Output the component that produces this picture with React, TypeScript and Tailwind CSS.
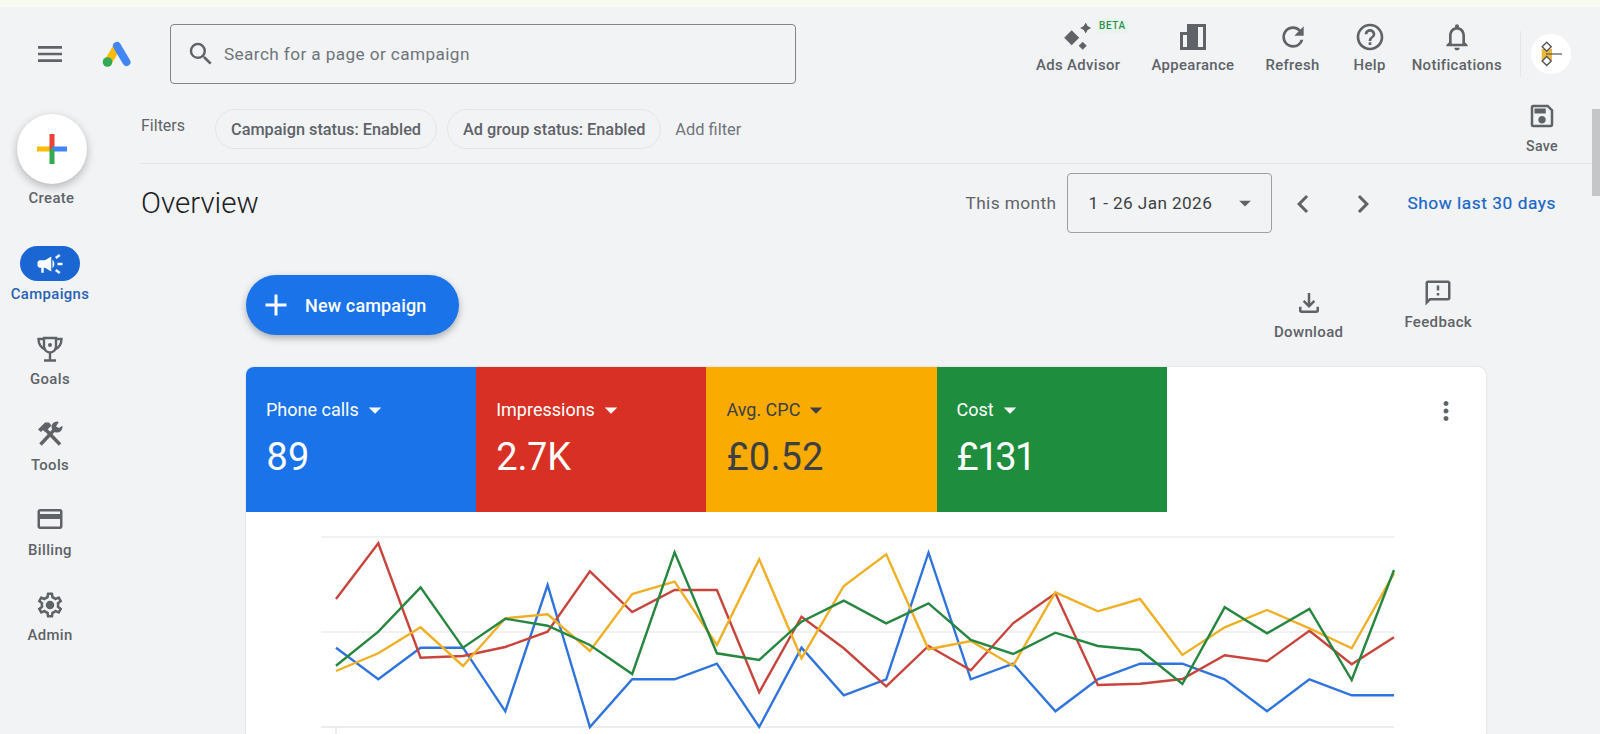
import React from "react";
import {
  MdMenu, MdSearch, MdRefresh, MdHelpOutline, MdOutlineNotifications, MdOutlineSave,
  MdCampaign, MdOutlineCreditCard, MdOutlineFileDownload, MdOutlineFeedback,
  MdMoreVert, MdArrowDropDown, MdChevronLeft, MdChevronRight, MdAdd,
} from "react-icons/md";

const X0 = 90;
const STEP = 42.32;
const toPts = (d: number[]) => d.map((p, i) => `${(X0 + STEP * i).toFixed(1)},${(p / 3 - 2).toFixed(1)}`).join(" ");

const blue = [413, 508, 413, 413, 604, 225, 651, 508, 508, 461, 651, 413, 556, 508, 128, 508, 461, 604, 508, 461, 461, 508, 604, 508, 556, 556];
const red = [267, 100, 443, 438, 411, 365, 184, 306, 240, 240, 547, 320, 415, 529, 408, 481, 340, 250, 525, 521, 507, 436, 454, 362, 463, 382];
const amber = [483, 430, 352, 468, 325, 313, 423, 252, 215, 405, 148, 445, 228, 133, 418, 393, 467, 247, 304, 267, 435, 352, 300, 355, 415, 190];
const green = [467, 365, 232, 413, 326, 347, 405, 492, 127, 430, 450, 335, 272, 340, 280, 390, 432, 368, 408, 420, 522, 292, 370, 297, 510, 180];

function Logo() {
  return (
    <svg width="30" height="28" viewBox="0 0 30 28" className="shrink-0">
      <line x1="15" y1="7" x2="6" y2="22" stroke="#fbbc04" strokeWidth="8" strokeLinecap="round" />
      <line x1="15" y1="6" x2="24.5" y2="22" stroke="#4285f4" strokeWidth="8" strokeLinecap="round" />
      <circle cx="5.5" cy="22" r="4.8" fill="#34a853" />
    </svg>
  );
}

function AdvisorIcon() {
  return (
    <svg width="30" height="28" viewBox="0 0 30 28">
      <path d="M8.7 7.2l7.5 7.5-7.5 7.5-7.5-7.5z" fill="#5f6368" />
      <path d="M22.7-.5l1.9 3.6 3.6 1.9-3.6 1.9-1.9 3.6-1.9-3.6-3.6-1.9 3.6-1.9z" fill="#5f6368" />
      <path d="M19.7 18.7l4 4-4 4-4-4z" fill="#5f6368" />
    </svg>
  );
}

function AppearanceIcon() {
  return (
    <svg width="26" height="26" viewBox="0 0 26 26">
      <path fillRule="evenodd" d="M0 8h7V0h19v26H0zM3 11v12h4V11zM18 3v20h5V3z" fill="#5f6368" />
    </svg>
  );
}

function TrophyIcon() {
  return (
    <svg width="28" height="28" viewBox="0 0 28 28" fill="none" stroke="#5f6368" strokeWidth="2.4">
      <path d="M8 3h12v8.5a6 6 0 0 1-12 0z" />
      <path d="M8 4H2.5c0 5 1.5 8.5 7 10.5M20 4h5.5c0 5-1.5 8.5-7 10.5" />
      <path d="M14 17.5V25M8 25.5h12" />
      <circle cx="14" cy="10" r="2" fill="#5f6368" stroke="none" />
    </svg>
  );
}

function ToolsIcon() {
  return (
    <svg width="26" height="26" viewBox="0 0 26 26">
      <line x1="9" y1="9" x2="23" y2="23.5" stroke="#5f6368" strokeWidth="3.4" />
      <line x1="19" y1="7" x2="3.5" y2="23.5" stroke="#5f6368" strokeWidth="3.4" />
      <path d="M1 8.5L8 1.5h4l2.5 3-6.5 6.5-2-2-2 2z" fill="#5f6368" />
      <circle cx="20" cy="6" r="5.5" fill="#5f6368" />
      <path d="M19 5.5L23 -1l5 4-6 4z" fill="#f1f3f5" />
    </svg>
  );
}

function GearIcon() {
  return (
    <svg width="30" height="30" viewBox="0 0 24 24" fill="#5f6368">
      <path d="M19.43 12.98c.04-.32.07-.64.07-.98 0-.34-.03-.66-.07-.98l2.11-1.65c.19-.15.24-.42.12-.64l-2-3.46c-.09-.16-.26-.25-.44-.25-.06 0-.12.01-.17.03l-2.49 1c-.52-.4-1.08-.73-1.69-.98l-.38-2.65C14.46 2.18 14.25 2 14 2h-4c-.25 0-.46.18-.49.42l-.38 2.65c-.61.25-1.17.59-1.69.98l-2.49-1c-.06-.02-.12-.03-.18-.03-.17 0-.34.09-.43.25l-2 3.46c-.13.22-.07.49.12.64l2.11 1.65c-.04.32-.07.65-.07.98 0 .33.03.66.07.98l-2.11 1.65c-.19.15-.24.42-.12.64l2 3.46c.09.16.26.25.44.25.06 0 .12-.01.17-.03l2.49-1c.52.4 1.08.73 1.69.98l.38 2.65c.03.24.24.42.49.42h4c.25 0 .46-.18.49-.42l.38-2.65c.61-.25 1.17-.59 1.69-.98l2.49 1c.06.02.12.03.18.03.17 0 .34-.09.43-.25l2-3.46c.12-.22.07-.49-.12-.64l-2.11-1.65zm-1.98-1.71c.04.31.05.52.05.73 0 .21-.02.43-.05.73l-.14 1.13.89.7 1.08.84-.7 1.21-1.27-.51-1.04-.42-.9.68c-.43.32-.84.56-1.25.73l-1.06.43-.16 1.13-.2 1.35h-1.4l-.19-1.35-.16-1.13-1.06-.43c-.43-.18-.83-.41-1.23-.71l-.91-.7-1.06.43-1.27.51-.7-1.21 1.08-.84.89-.7-.14-1.13c-.03-.31-.05-.54-.05-.74s.02-.43.05-.73l.14-1.13-.89-.7-1.08-.84.7-1.21 1.27.51 1.04.42.9-.68c.43-.32.84-.56 1.25-.73l1.06-.43.16-1.13.2-1.35h1.39l.19 1.35.16 1.13 1.06.43c.43.18.83.41 1.23.71l.91.7 1.06-.43 1.27-.51.7 1.21-1.07.85-.89.7.14 1.13z" />
      <circle cx="12" cy="12" r="3.4" />
    </svg>
  );
}

function Avatar() {
  return (
    <div className="flex h-[40px] w-[40px] items-center justify-center rounded-full bg-white">
      <svg width="40" height="40" viewBox="0 0 40 40">
        <rect x="10.7" y="15" width="10.3" height="11" fill="#edb83a" />
        <path d="M15.7 8.2l4.5 4.5-4.5 4.5-4.5-4.5zM15.7 22.5l4.5 4.5-4.5 4.5-4.5-4.5z" fill="#fff" stroke="#555" strokeWidth="1.4" />
        <path d="M15 20h16" stroke="#555" strokeWidth="1.2" />
      </svg>
    </div>
  );
}

function Tool({ icon, label, className }: { icon: React.ReactNode; label: string; className: string }) {
  return (
    <div className={`flex flex-col items-center ${className}`}>
      <div className="-mt-[1px] flex h-[28px] items-center justify-center">{icon}</div>
      <span className="mt-[5px] text-[14.9px] leading-[18px] font-medium tracking-[0.35px] whitespace-nowrap text-[#5f6368]">{label}</span>
    </div>
  );
}

function NavItem({ icon, label, active }: { icon: React.ReactNode; label: string; active?: boolean }) {
  return (
    <div className="flex h-[85.3px] flex-col items-center">
      <div className={active ? "flex h-[35px] w-[60px] items-center justify-center rounded-full bg-[#1a66d2]" : "flex h-[35px] w-[60px] items-center justify-center"}>{icon}</div>
      <span className={active ? "mt-[4px] text-[14.9px] leading-[18px] font-medium tracking-[0.35px] text-[#2a62b4]" : "mt-[4px] text-[14.9px] leading-[18px] font-medium tracking-[0.35px] text-[#5f6368]"}>{label}</span>
    </div>
  );
}

function Chip({ label }: { label: string }) {
  return (
    <div className="flex h-[40px] items-center rounded-full border border-[#e3e5e8] px-[15px] pt-[2px] text-[16.3px] font-medium whitespace-nowrap text-[#5f6368]">{label}</div>
  );
}

function Metric({ bg, fg, label, value }: { bg: string; fg: string; label: string; value: string }) {
  return (
    <div className={`h-[145px] w-[230.2px] shrink-0 pt-[31px] pl-[20px] ${bg} ${fg}`}>
      <div className="flex h-[24px] items-center text-[18px] leading-[24px]">
        <span>{label}</span>
        <MdArrowDropDown size={30} className="ml-[1px]" />
      </div>
      <div className="mt-[11px] text-[38px] leading-[48px] proportional-nums">{value}</div>
    </div>
  );
}

export default function App() {
  return (
    <div className="relative flex h-[734px] w-[1600px] flex-col overflow-hidden bg-[#f1f3f5] font-['Roboto',sans-serif]">
      <div className="h-[7px] shrink-0 bg-[#f8fcf0]" />

      <header className="flex h-[93px] shrink-0 items-center">
        <MdMenu size={32} color="#5f6368" className="ml-[34px] shrink-0" />
        <div className="ml-[36px]"><Logo /></div>
        <div className="ml-[38px] flex h-[60px] w-[626px] items-center rounded-[4px] border border-[#80868b]">
          <MdSearch size={30} color="#5f6368" className="ml-[15px]" />
          <span className="ml-[8px] pt-[2px] text-[17.2px] tracking-[0.4px] text-[#70757a]">Search for a page or campaign</span>
        </div>
        <div className="relative -mt-[9px] ml-auto flex items-start">
          <div className="relative">
            <Tool className="" icon={<AdvisorIcon />} label="Ads Advisor" />
            <span className="absolute top-[-5px] left-[61px] rounded-[3px] bg-[#e9f4ec] px-[2px] text-[10px] leading-[14px] font-medium tracking-[0.6px] text-[#2d9150]">BETA</span>
          </div>
          <Tool className="ml-[31px]" icon={<AppearanceIcon />} label="Appearance" />
          <Tool className="ml-[31px]" icon={<MdRefresh size={32} color="#5f6368" />} label="Refresh" />
          <Tool className="ml-[34px]" icon={<MdHelpOutline size={32} color="#5f6368" />} label="Help" />
          <Tool className="ml-[26px]" icon={<MdOutlineNotifications size={32} color="#5f6368" />} label="Notifications" />
        </div>
        <div className="mr-[29px] ml-[18px] flex items-center">
          <div className="h-[46px] w-px bg-[#e3e5e8]" />
          <div className="ml-[10px]"><Avatar /></div>
        </div>
      </header>

      <div className="flex min-h-0 flex-1">
        <aside className="flex w-[141px] shrink-0 flex-col">
          <div className="flex w-[104px] flex-col items-center pt-[14px]">
            <div className="flex h-[70px] w-[70px] items-center justify-center rounded-full bg-white shadow-[0_3px_8px_rgba(60,64,67,0.35)]">
              <svg width="30" height="30" viewBox="0 0 30 30">
                <rect x="0" y="12.5" width="15" height="5" fill="#fbbc04" />
                <rect x="12.5" y="0" width="5" height="15" fill="#ea4335" />
                <rect x="15" y="12.5" width="15" height="5" fill="#4285f4" />
                <rect x="12.5" y="15" width="5" height="15" fill="#34a853" />
              </svg>
            </div>
            <span className="mt-[5px] -ml-[1px] text-[14.9px] leading-[18px] font-medium tracking-[0.35px] text-[#5f6368]">Create</span>
            <div className="mt-[39px] -ml-[4px] flex flex-col items-center">
              <NavItem active icon={<MdCampaign size={30} color="#fff" />} label="Campaigns" />
              <NavItem icon={<TrophyIcon />} label="Goals" />
              <NavItem icon={<ToolsIcon />} label="Tools" />
              <NavItem icon={<MdOutlineCreditCard size={30} color="#5f6368" />} label="Billing" />
              <NavItem icon={<GearIcon />} label="Admin" />
            </div>
          </div>
        </aside>

        <main className="min-w-0 flex-1">
          <div className="flex h-[64px] items-start border-b border-[#e3e5e8] pr-[42px]">
            <span className="mt-[17px] text-[16px] leading-[18px] text-[#5f6368]">Filters</span>
            <div className="mt-[9px] ml-[30px] flex items-center gap-[10px]">
              <Chip label="Campaign status: Enabled" />
              <Chip label="Ad group status: Enabled" />
              <span className="ml-[4px] pt-[2px] text-[16.4px] text-[#70757a]">Add filter</span>
            </div>
            <div className="mt-[1px] ml-auto flex flex-col items-center">
              <MdOutlineSave size={30} color="#5f6368" />
              <span className="mt-[6px] text-[14.2px] leading-[18px] font-medium tracking-[0.3px] text-[#5f6368]">Save</span>
            </div>
          </div>

          <div className="flex h-[78px] items-center pr-[44px]">
            <h1 className="text-[29.5px] leading-[34px] font-light text-[#202124]">Overview</h1>
            <span className="mt-[2px] ml-auto text-[17.3px] tracking-[0.4px] text-[#5f6368]">This month</span>
            <div className="ml-[11px] flex h-[60px] w-[205px] items-center rounded-[4px] border border-[#9aa0a6] pl-[20px] text-[17.2px] tracking-[0.4px] text-[#3c4043]">
              <span className="pt-[2px]">1 - 26 Jan 2026</span>
              <MdArrowDropDown size={28} color="#5f6368" className="ml-[19px]" />
            </div>
            <MdChevronLeft size={36} color="#5f6368" className="mt-[2px] ml-[13px]" />
            <MdChevronRight size={36} color="#5f6368" className="mt-[2px] ml-[24px]" />
            <span className="mt-[2px] ml-[26px] text-[17.3px] tracking-[0.55px] text-[#1a66c8] [-webkit-text-stroke:0.2px_#1a66c8]">Show last 30 days</span>
          </div>

          <div className="relative ml-[105px] flex h-[125px] w-[1240px] items-start">
            <button className="mt-[33px] flex h-[60px] w-[213px] items-center rounded-full bg-[#1a73e8] pl-[12px] text-[18px] font-medium tracking-[0.15px] text-white shadow-[0_3px_7px_rgba(60,64,67,0.4)]">
              <MdAdd size={36} color="#fff" />
              <span className="ml-[11px]">New campaign</span>
            </button>
            <div className="mt-[36px] ml-auto flex items-start pr-[14px]">
              <div className="mt-[10px] flex flex-col items-center">
                <MdOutlineFileDownload size={30} color="#5f6368" />
                <span className="mt-[5px] text-[15px] leading-[18px] font-medium tracking-[0.35px] text-[#5f6368]">Download</span>
              </div>
              <div className="ml-[61px] flex flex-col items-center">
                <MdOutlineFeedback size={30} color="#5f6368" />
                <span className="mt-[5px] text-[15px] leading-[18px] font-medium tracking-[0.35px] text-[#5f6368]">Feedback</span>
              </div>
            </div>
          </div>

          <section className="relative ml-[105px] w-[1240px] overflow-hidden rounded-[8px] bg-white shadow-[0_0_2px_rgba(60,64,67,0.2)]">
            <div className="flex">
              <Metric bg="bg-[#1a73e8]" fg="text-white" label="Phone calls" value="89" />
              <Metric bg="bg-[#d93025]" fg="text-white" label="Impressions" value="2.7K" />
              <Metric bg="bg-[#f9ab00]" fg="text-[#3c4043]" label="Avg. CPC" value="£0.52" />
              <Metric bg="bg-[#1e8e3e]" fg="text-white" label="Cost" value="£131" />
              <div className="flex flex-1 justify-end pt-[29px] pr-[25px]">
                <MdMoreVert size={30} color="#5f6368" />
              </div>
            </div>
            <svg width="1240" height="240" viewBox="0 0 1240 240" className="block">
              <line x1="75" y1="25" x2="1148" y2="25" stroke="#e3e3e3" strokeWidth="1" />
              <line x1="75" y1="120" x2="1148" y2="120" stroke="#e3e3e3" strokeWidth="1" />
              <line x1="75" y1="215" x2="1148" y2="215" stroke="#dadce0" strokeWidth="1" />
              <line x1="90" y1="215" x2="90" y2="240" stroke="#dadce0" strokeWidth="1" />
              <polyline points={toPts(blue)} fill="none" stroke="#2f74dc" strokeWidth="2.4" />
              <polyline points={toPts(red)} fill="none" stroke="#c8453d" strokeWidth="2.4" />
              <polyline points={toPts(amber)} fill="none" stroke="#eeb027" strokeWidth="2.4" />
              <polyline points={toPts(green)} fill="none" stroke="#27863f" strokeWidth="2.4" />
            </svg>
          </section>
        </main>
      </div>

      <div className="absolute top-[109px] right-0 h-[87px] w-[8px] bg-[#c4c6c8]" />
    </div>
  );
}
